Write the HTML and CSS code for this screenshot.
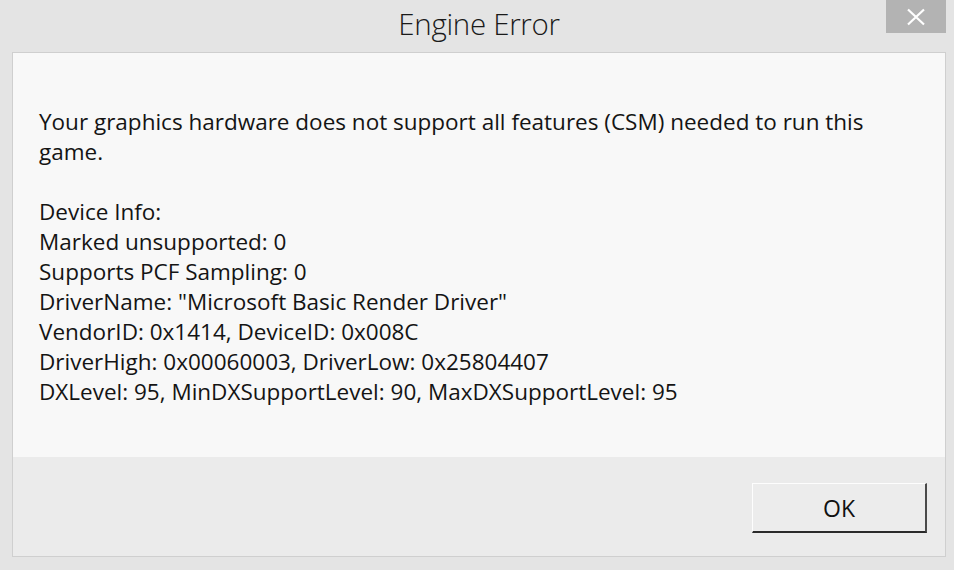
FILE: index.html
```html
<!DOCTYPE html>
<html>
<head>
<meta charset="utf-8">
<link rel="stylesheet" href="styles.css">
</head>
<body>
<div class="window">
  <div class="titlebar">
    <div class="title">Engine Error</div>
    <div class="close">
      <svg width="20" height="18" viewBox="0 0 20 18"><path d="M2 1.5 L18 16.5 M18 1.5 L2 16.5" stroke="#ffffff" stroke-width="2.2" fill="none"/></svg>
    </div>
  </div>
  <div class="panel">
    <div class="content">
      <p class="msg">Your graphics hardware does not support all features (CSM) needed to run this game.</p>
      <p class="msg">Device Info:<br>Marked unsupported: 0<br>Supports PCF Sampling: 0<br>DriverName: "Microsoft Basic Render Driver"<br>VendorID: 0x1414, DeviceID: 0x008C<br>DriverHigh: 0x00060003, DriverLow: 0x25804407<br>DXLevel: 95, MinDXSupportLevel: 90, MaxDXSupportLevel: 95</p>
    </div>
    <div class="footer">
      <button class="ok">OK</button>
    </div>
  </div>
</div>
</body>
</html>
```
FILE: styles.css
```css
html, body {
  margin: 0;
  padding: 0;
  width: 954px;
  height: 570px;
  overflow: hidden;
  background: #e4e4e4;
}
.window {
  width: 954px;
  height: 570px;
  display: flex;
  flex-direction: column;
  background: #e4e4e4;
  font-family: "Open Sans", "Noto Sans", sans-serif;
  color: #141414;
}
.titlebar {
  height: 52px;
  position: relative;
  display: flex;
  justify-content: center;
  align-items: flex-start;
}
.title {
  font-size: 29.5px;
  font-weight: 300;
  line-height: 48px;
  letter-spacing: -0.3px;
  color: #1a1a1a;
  margin-left: 4px;
}
.close {
  position: absolute;
  top: 0;
  right: 8px;
  width: 60px;
  height: 33px;
  background: #b3b3b3;
  display: flex;
  align-items: center;
  justify-content: center;
}
.panel {
  margin: 0 8px 13px 12px;
  flex: 1;
  border: 1px solid #cfcfcf;
  display: flex;
  flex-direction: column;
}
.content {
  background: #f8f8f8;
  height: 404px;
  padding: 54px 27px 0 26px;
  box-sizing: border-box;
}
.msg {
  margin: 0 0 29px 0;
  font-size: 22.5px;
  line-height: 30px;
  letter-spacing: 0;
}
.msg + .msg {
  margin-top: 30px;
}
.footer {
  flex: 1;
  background: #ebebeb;
  display: flex;
  justify-content: flex-end;
  align-items: flex-start;
  padding: 26px 18px 0 0;
}
.ok {
  width: 175px;
  height: 50px;
  background: #ececec;
  border: 1px solid #adadad;
  border-top-color: #fdfdfd;
  border-left-color: #fdfdfd;
  border-bottom: 2px solid #2a2a2a;
  border-right: 2px solid #4a4a4a;
  font-family: "Open Sans", "Noto Sans", sans-serif;
  font-size: 23px;
  color: #111;
  padding: 0;
}
```
